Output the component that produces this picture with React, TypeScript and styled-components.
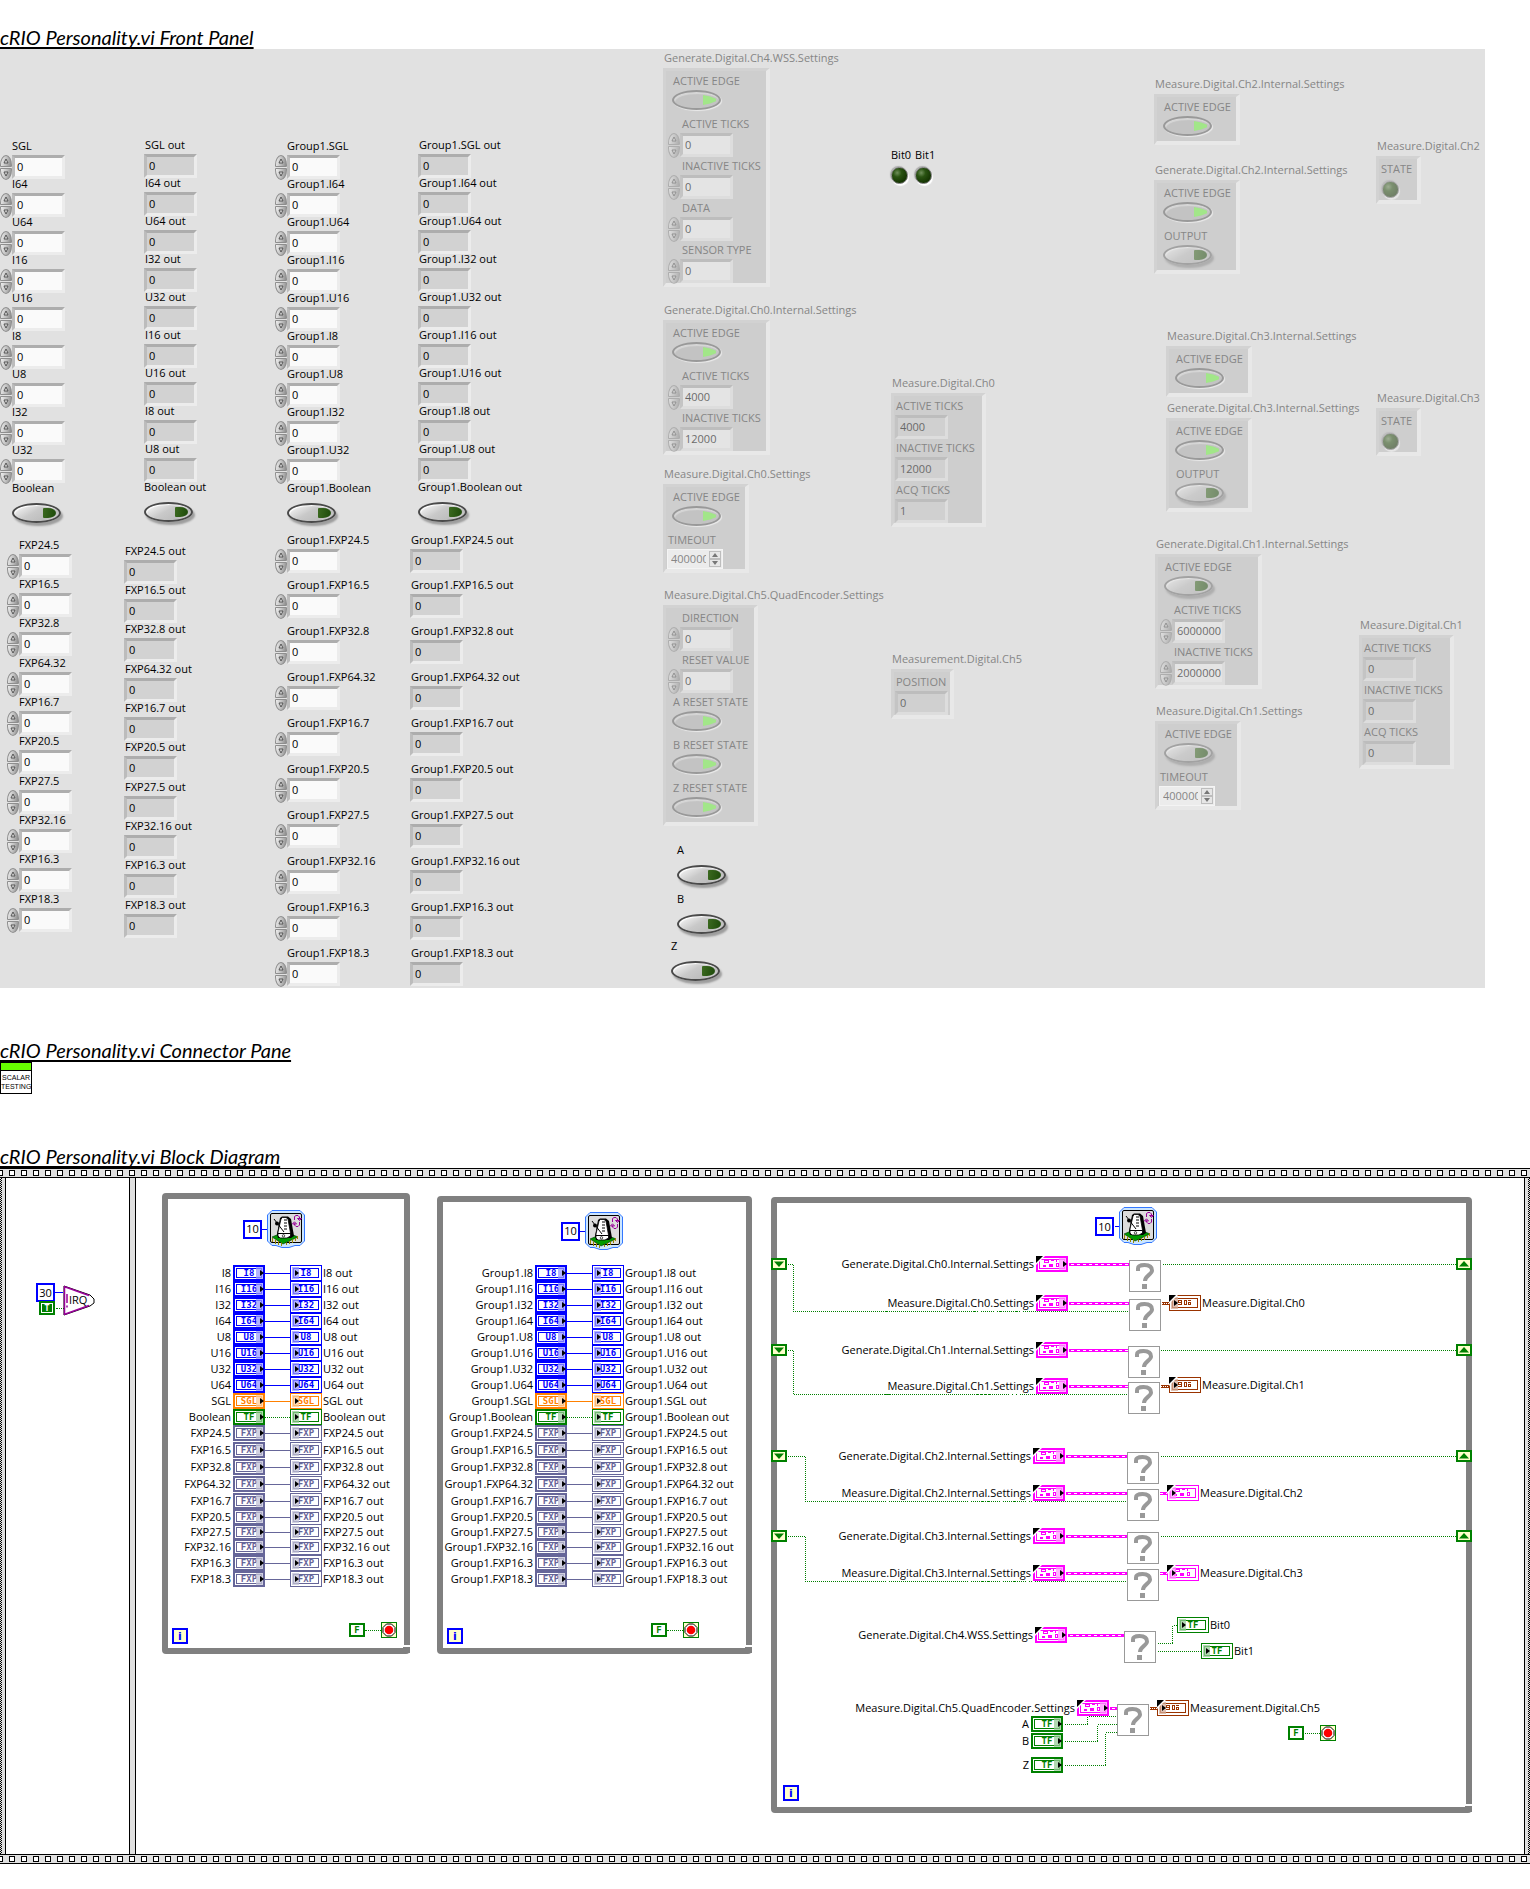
import React, { useId } from 'react';
import styled, { createGlobalStyle, css } from 'styled-components';

const GlobalStyle = createGlobalStyle`
  * { box-sizing: border-box; }
  body {
    margin: 0;
    background: #fff;
    color: #000;
    font: 11px/14px "Open Sans", "Noto Sans", sans-serif;
  }
  button, input { font: inherit; color: inherit; margin: 0; padding: 0; }
`;

/* ---------- page ---------- */

const Page = styled.main`
  padding: 25px 0;
`;

const Heading = styled.h2`
  margin: 0;
  height: 24px;
  font: italic 400 20px/24px Lato, "Open Sans", sans-serif;
  white-space: nowrap;
  text-decoration: underline;
  text-decoration-thickness: 2px;
  text-decoration-skip-ink: none;
  text-underline-offset: 2px;
`;

const Section = styled.section<{ $after?: number }>`
  margin-bottom: ${p => p.$after ?? 0}px;
`;

/* ---------- front panel ---------- */

const FrontPanel = styled.div`
  display: grid;
  grid-template-columns: 124px 151px 135px 253px 228px 263px 205px 1fr;
  width: calc(100% - 45px);
  height: 939px;
  background: #e1e1e1;
  overflow: hidden;
`;

const Column = styled.div`
  min-width: 0;
  white-space: nowrap;
`;

const List = styled.div<{ $top: number; $left?: number; $rows: string }>`
  display: grid;
  grid-template-rows: ${p => p.$rows};
  margin-top: ${p => p.$top}px;
  padding-left: ${p => p.$left ?? 0}px;
`;

const Offset = styled.div<{ $top: number; $left?: number }>`
  margin-top: ${p => p.$top}px;
  padding-left: ${p => p.$left ?? 0}px;
`;

type Kind = 'spin' | 'read' | 'button' | 'led' | 'timeout';

const FieldBox = styled.div<{ $kind: Kind; $inCluster?: boolean }>`
  display: flex;
  flex-direction: column;
  align-items: flex-start;
  height: ${p => (p.$kind === 'button' && p.$inCluster ? 36 : 40)}px;
  ${p =>
    p.$inCluster &&
    css`
      margin-bottom: ${p.$kind === 'button' ? 7 : 2}px;
      &:last-child { margin-bottom: ${p.$kind === 'button' ? 5 : 0}px; }
      ${p.$kind === 'timeout' && 'height: 36px;'}
      ${p.$kind === 'led' && 'height: 38px;'}
    `}
`;

const FieldLabel = styled.label<{ $indent: number; $gap: number }>`
  display: block;
  height: 14px;
  margin: 0 0 ${p => p.$gap}px ${p => p.$indent}px;
`;

const ControlRow = styled.div<{ $dim?: boolean }>`
  display: flex;
  align-items: center;
  height: 24px;
  color: #000;
  opacity: ${p => (p.$dim ? 0.5 : 1)};
`;

const SpinnerBox = styled.div`
  display: flex;
  flex-direction: column;
  width: 12px;
  gap: 1px;
`;

const SpinButton = styled.button<{ $down?: boolean }>`
  display: flex;
  justify-content: center;
  align-items: center;
  width: 12px;
  height: 12px;
  border: 1px solid #8e8e8e;
  border-radius: ${p => (p.$down ? '1px 1px 6px 6px / 1px 1px 10px 10px' : '6px 6px 1px 1px / 10px 10px 1px 1px')};
  background: linear-gradient(100deg, #f0f0f0, #bdbdbd 55%, #8c8c8c);
`;

const ValueBox = styled.input<{ $read?: boolean }>`
  width: 53px;
  height: 24px;
  padding: 0 0 1px 2px;
  border: 3px solid;
  border-color: #adadad #ececec #ececec #bcbcbc;
  border-radius: 0;
  background: ${p => (p.$read ? '#d2d2d2' : '#fafafa')};
  outline: none;
`;

const TimeoutBox = styled.div`
  display: flex;
  align-items: center;
  gap: 3px;
  width: 56px;
  height: 20px;
  padding: 0 2px 0 3px;
  background: #ececec;
  border: 1px solid #f4f4f4;
  color: #868686;
`;

const TimeoutInput = styled.input`
  width: 35px;
  border: 0;
  background: transparent;
  outline: none;
`;

const StepperBox = styled.div`
  display: flex;
  flex-direction: column;
  width: 12px;
`;

const StepButton = styled.button`
  display: flex;
  justify-content: center;
  align-items: center;
  width: 12px;
  height: 8px;
  border: 1px solid #bdbdbd;
  background: #e6e6e6;
`;

const Toggle = styled.input<{ $dim?: boolean }>`
  appearance: none;
  display: flex;
  justify-content: flex-end;
  align-items: center;
  width: 49px;
  height: 20px;
  padding-right: 3px;
  border: 2px solid ${p => (p.$dim ? '#777' : '#4a4a4a')};
  border-radius: 50%;
  background: linear-gradient(150deg, #f2f2f2 10%, #c9c9c9 45%, #bdbdbd 75%, #dedede);
  box-shadow: 2px 3px 2px rgba(0, 0, 0, 0.3), inset 1px 1px 1px #fff;
  opacity: ${p => (p.$dim ? 0.5 : 1)};
  &::after {
    content: '';
    width: 13px;
    height: 10px;
    background: linear-gradient(100deg, #3c6a20, #1d4a0a);
    border-radius: 1px 8px 8px 1px / 1px 5px 5px 1px;
  }
  &:checked {
    border-color: #777;
    background: #bcbcbc;
    box-shadow: 1px 1px 1px #fff, inset 1px 2px 1px #ddd;
    opacity: ${p => (p.$dim ? 0.6 : 1)};
  }
  &:checked::after {
    background: #86f65c;
    border-radius: 0;
    clip-path: polygon(0 0, 55% 14%, 100% 38%, 100% 62%, 55% 86%, 0 100%);
  }
`;

const Led = styled.output<{ $dim?: boolean }>`
  display: block;
  width: 17px;
  height: 17px;
  margin-left: ${p => (p.$dim ? 2 : 0)}px;
  border-radius: 50%;
  border: 1px solid #777;
  background: radial-gradient(circle at 35% 32%, #6f8f5a, #2a5312 30%, #163603 70%);
  box-shadow: 1px 2px 1px #fff, -1px -1px 1px #aaa;
  opacity: ${p => (p.$dim ? 0.5 : 1)};
`;

const ClusterBox = styled.fieldset<{ $top: number; $left?: number }>`
  margin: ${p => p.$top}px 0 0 ${p => p.$left ?? 0}px;
  padding: 0;
  border: 0;
  min-width: 0;
  color: #868686;
`;

const ClusterTitle = styled.legend`
  height: 18px;
  padding: 0 0 0 1px;
  line-height: 16px;
`;

const ClusterFrame = styled.div<{ $width: number }>`
  width: ${p => p.$width}px;
  padding: 3px 0 0 1px;
  border: solid;
  border-width: 3px 4px 4px 3px;
  border-color: #d2d2d2 #e8e8e8 #e8e8e8 #d2d2d2;
  background: #cecece;
`;

const BitRow = styled.div`
  display: flex;
  gap: 4px;
  margin-top: 99px;
  height: 36px;
`;

function Triangle({ down, color = '#3a3a3a' }: { down?: boolean; color?: string }) {
  return (
    <svg width="6" height="4" viewBox="0 0 6 4" aria-hidden="true">
      <path d={down ? 'M0 0H6L3 4Z' : 'M0 4H6L3 0Z'} fill={color} />
    </svg>
  );
}

function SpinGlyph({ down }: { down?: boolean }) {
  return (
    <svg width="6" height="6" viewBox="0 0 6 6" aria-hidden="true">
      <path d={down ? 'M1 1H5L3 5Z' : 'M1 5H5L3 1Z'} fill="#e2e2e2" stroke="#555" />
    </svg>
  );
}

interface FieldProps {
  label: string;
  kind: Kind;
  value?: string;
  on?: boolean;
  dim?: boolean;
  inCluster?: boolean;
}

function Field({ label, kind, value = '0', on, dim, inCluster }: FieldProps) {
  const id = useId();
  let indent = 0;
  if (kind === 'spin') indent = inCluster ? 15 : 12;
  if (kind === 'button') indent = inCluster ? 6 : 0;
  if (kind === 'read') indent = 1;
  if (inCluster && (kind === 'timeout' || kind === 'led')) indent = 1;
  const gap = kind === 'button' && !inCluster ? 8 : kind === 'led' ? 5 : 2;
  return (
    <FieldBox $kind={kind} $inCluster={inCluster}>
      <FieldLabel htmlFor={id} $indent={indent} $gap={gap}>{label}</FieldLabel>
      {kind === 'spin' && (
        <Offset $top={0} $left={inCluster ? 1 : 0}>
          <ControlRow $dim={dim}>
            <SpinnerBox>
              <SpinButton aria-label={`Increase ${label}`}><SpinGlyph /></SpinButton>
              <SpinButton $down aria-label={`Decrease ${label}`}><SpinGlyph down /></SpinButton>
            </SpinnerBox>
            <ValueBox id={id} defaultValue={value} />
          </ControlRow>
        </Offset>
      )}
      {kind === 'read' && (
        <ControlRow $dim={dim}><ValueBox id={id} $read readOnly value={value} /></ControlRow>
      )}
      {kind === 'button' && (
        <Offset $top={0} $left={inCluster ? 5 : 0}>
          <Toggle id={id} type="checkbox" defaultChecked={on} $dim={dim} />
        </Offset>
      )}
      {kind === 'led' && <Led id={id} $dim={dim} aria-label={label} />}
      {kind === 'timeout' && (
        <TimeoutBox>
          <TimeoutInput id={id} defaultValue={value} />
          <StepperBox>
            <StepButton aria-label="Increase timeout"><Triangle color="#777" /></StepButton>
            <StepButton aria-label="Decrease timeout"><Triangle down color="#777" /></StepButton>
          </StepperBox>
        </TimeoutBox>
      )}
    </FieldBox>
  );
}

interface ClusterProps {
  title: string;
  top: number;
  left?: number;
  width: number;
  fields: FieldProps[];
}

function Cluster({ title, top, left, width, fields }: ClusterProps) {
  return (
    <ClusterBox $top={top} $left={left}>
      <ClusterTitle>{title}</ClusterTitle>
      <ClusterFrame $width={width}>
        {fields.map(f => <Field key={f.label} {...f} dim inCluster />)}
      </ClusterFrame>
    </ClusterBox>
  );
}

const EDGE: FieldProps = { label: 'ACTIVE EDGE', kind: 'button', on: true };
const EDGE_OFF: FieldProps = { label: 'ACTIVE EDGE', kind: 'button' };
const OUTPUT: FieldProps = { label: 'OUTPUT', kind: 'button' };
const STATE: FieldProps = { label: 'STATE', kind: 'led' };
const TIMEOUT: FieldProps = { label: 'TIMEOUT', kind: 'timeout', value: '400000' };
const spin = (label: string, value = '0'): FieldProps => ({ label, kind: 'spin', value });
const read = (label: string, value = '0'): FieldProps => ({ label, kind: 'read', value });

const INPUTS = ['SGL', 'I64', 'U64', 'I16', 'U16', 'I8', 'U8', 'I32', 'U32'];
const OUTPUTS = ['SGL', 'I64', 'U64', 'I32', 'U32', 'I16', 'U16', 'I8', 'U8'];
const FIXED = ['24.5', '16.5', '32.8', '64.32', '16.7', '20.5', '27.5', '32.16', '16.3', '18.3'].map(n => `FXP${n}`);

const SCALAR_ROWS = 'repeat(10, 38px)';
const FIXED_ROWS = 'repeat(3, 39px 39px 40px) 40px';
const GROUP_ROWS = '45px repeat(9, 46px)';

function ScalarList({ top, left, prefix = '', out }: { top: number; left?: number; prefix?: string; out?: boolean }) {
  const tail = out ? ' out' : '';
  return (
    <List $top={top} $left={left} $rows={SCALAR_ROWS}>
      {(out ? OUTPUTS : INPUTS).map(n => (
        <Field key={n} label={`${prefix}${n}${tail}`} kind={out ? 'read' : 'spin'} />
      ))}
      <Offset $top={0} $left={out ? 0 : 12}>
        <Field label={`${prefix}Boolean${tail}`} kind="button" />
      </Offset>
    </List>
  );
}

function FixedList({ top, left, prefix = '', out, rows }: { top: number; left?: number; prefix?: string; out?: boolean; rows: string }) {
  const tail = out ? ' out' : '';
  return (
    <List $top={top} $left={left} $rows={rows}>
      {FIXED.map(n => <Field key={n} label={`${prefix}${n}${tail}`} kind={out ? 'read' : 'spin'} />)}
    </List>
  );
}

function FrontPanelView() {
  return (
    <FrontPanel>
      <Column>
        <ScalarList top={90} />
        <FixedList top={19} left={7} rows={FIXED_ROWS} />
      </Column>
      <Column>
        <ScalarList top={89} left={20} out />
        <FixedList top={26} out rows={FIXED_ROWS} />
      </Column>
      <Column>
        <ScalarList top={90} prefix="Group1." />
        <FixedList top={14} prefix="Group1." rows={GROUP_ROWS} />
      </Column>
      <Column>
        <ScalarList top={89} left={8} prefix="Group1." out />
        <FixedList top={15} prefix="Group1." out rows={GROUP_ROWS} />
      </Column>
      <Column>
        <Cluster title="Generate.Digital.Ch4.WSS.Settings" top={1} width={107}
          fields={[EDGE, spin('ACTIVE TICKS'), spin('INACTIVE TICKS'), spin('DATA'), spin('SENSOR TYPE')]} />
        <Cluster title="Generate.Digital.Ch0.Internal.Settings" top={15} width={107}
          fields={[EDGE, spin('ACTIVE TICKS', '4000'), spin('INACTIVE TICKS', '12000')]} />
        <Cluster title="Measure.Digital.Ch0.Settings" top={11} width={86} fields={[EDGE, TIMEOUT]} />
        <Cluster title="Measure.Digital.Ch5.QuadEncoder.Settings" top={14} width={95}
          fields={[
            spin('DIRECTION'), spin('RESET VALUE'),
            { ...EDGE, label: 'A RESET STATE' }, { ...EDGE, label: 'B RESET STATE' }, { ...EDGE, label: 'Z RESET STATE' },
          ]} />
        <Offset $top={17} $left={14}><Field label="A" kind="button" /></Offset>
        <Offset $top={9} $left={14}><Field label="B" kind="button" /></Offset>
        <Offset $top={7} $left={8}><Field label="Z" kind="button" /></Offset>
      </Column>
      <Column>
        <BitRow>
          <Field label="Bit0" kind="led" />
          <Field label="Bit1" kind="led" />
        </BitRow>
        <Cluster title="Measure.Digital.Ch0" top={191} width={95}
          fields={[read('ACTIVE TICKS', '4000'), read('INACTIVE TICKS', '12000'), read('ACQ TICKS', '1')]} />
        <Cluster title="Measurement.Digital.Ch5" top={124} width={63} fields={[read('POSITION')]} />
      </Column>
      <Column>
        <Cluster title="Measure.Digital.Ch2.Internal.Settings" top={27} width={86} fields={[EDGE]} />
        <Cluster title="Generate.Digital.Ch2.Internal.Settings" top={17} width={86} fields={[EDGE, OUTPUT]} />
        <Cluster title="Measure.Digital.Ch3.Internal.Settings" top={54} left={12} width={86} fields={[EDGE]} />
        <Cluster title="Generate.Digital.Ch3.Internal.Settings" top={3} left={12} width={86} fields={[EDGE, OUTPUT]} />
        <Cluster title="Generate.Digital.Ch1.Internal.Settings" top={24} left={1} width={107}
          fields={[EDGE_OFF, spin('ACTIVE TICKS', '6000000'), spin('INACTIVE TICKS', '2000000')]} />
        <Cluster title="Measure.Digital.Ch1.Settings" top={14} left={1} width={86} fields={[EDGE_OFF, TIMEOUT]} />
      </Column>
      <Column>
        <Cluster title="Measure.Digital.Ch2" top={89} left={17} width={45} fields={[STATE]} />
        <Cluster title="Measure.Digital.Ch3" top={186} left={17} width={45} fields={[STATE]} />
        <Cluster title="Measure.Digital.Ch1" top={161} width={95}
          fields={[read('ACTIVE TICKS'), read('INACTIVE TICKS'), read('ACQ TICKS')]} />
      </Column>
    </FrontPanel>
  );
}

/* ---------- connector pane ---------- */

const PaneIcon = styled.div`
  width: 32px;
  height: 32px;
  border: 1px solid #000;
  background: linear-gradient(#66ff00 7px, #000 7px, #000 8px, #fff 8px);
  padding-top: 10px;
  font: 400 7px/9px "Liberation Sans", sans-serif;
  text-align: center;
  white-space: nowrap;
`;

/* ---------- block diagram ---------- */

const Diagram = styled.div`
  white-space: nowrap;
`;

const Frames = styled.div`
  display: flex;
  gap: 5px;
  padding: 0 5px;
  background:
    linear-gradient(#e0e0e0, #e0e0e0) 2px 0 / calc(100% - 4px) 100% no-repeat,
    repeating-conic-gradient(#000 0 25%, #e0e0e0 0 50%) 0 0 / 2px 2px;
`;

const Frame = styled.div<{ $width?: number }>`
  border: 1px solid #000;
  border-width: 0 1px;
  background: #fff;
  ${p => (p.$width ? `flex: 0 0 ${p.$width}px;` : 'flex: 1; display: flex; align-items: flex-start;')}
  min-height: 676px;
`;

const Loop = styled.section<{ $top: number; $left: number; $width: number; $height: number }>`
  position: relative;
  display: flex;
  flex-direction: column;
  flex: none;
  width: ${p => p.$width}px;
  height: ${p => p.$height}px;
  margin: ${p => p.$top}px 0 0 ${p => p.$left}px;
  border: 6px solid #808080;
  border-radius: 4px;
`;

const LoopNotch = styled.svg`
  position: absolute;
  right: -6px;
  bottom: -6px;
`;

const TimerRow = styled.div<{ $top: number; $left: number }>`
  display: flex;
  align-items: center;
  margin: ${p => p.$top}px 0 0 ${p => p.$left}px;
  height: 38px;
`;

const NumberConst = styled.span`
  display: grid;
  place-items: center;
  width: 19px;
  height: 19px;
  border: 2px solid #0000ff;
  background: #fff;
`;

const HLine = styled.span<{ $width: number; $color: string; $dotted?: boolean }>`
  display: block;
  width: ${p => p.$width}px;
  border-top: 1px ${p => (p.$dotted ? 'dotted' : 'solid')} ${p => p.$color};
`;

const TerminalRows = styled.div<{ $top: number }>`
  display: grid;
  grid-template-rows: repeat(10, 16px) repeat(4, 17px) 16px 15px 15px repeat(3, 16px);
  margin-top: ${p => p.$top}px;
`;

const TerminalRow = styled.div<{ $label: number }>`
  display: grid;
  grid-template-columns: ${p => p.$label}px 32px 25px 32px 1fr;
  align-items: center;
  height: 16px;
`;

const NodeLabel = styled.span<{ $right?: boolean }>`
  line-height: 16px;
  padding: 0 2px 0 1px;
  justify-self: ${p => (p.$right ? 'end' : 'start')};
`;

const TerminalBox = styled.span<{ $color: string; $out?: boolean }>`
  position: relative;
  display: block;
  flex: none;
  width: 32px;
  height: 16px;
  padding: ${p => (p.$out ? 2 : 1)}px;
  border: ${p => (p.$out ? 1 : 2)}px solid ${p => p.$color};
  background: #fff;
  color: ${p => p.$color};
  &::after {
    content: '';
    position: absolute;
    top: ${p => (p.$out ? 1 : 0)}px;
    bottom: ${p => (p.$out ? 1 : 0)}px;
    ${p => (p.$out ? 'left: 1px;' : 'right: 0;')}
    width: 7px;
    background: linear-gradient(rgba(255, 255, 255, 0.6), rgba(255, 255, 255, 0.6)), ${p => p.$color};
    opacity: 0.75;
  }
`;

const TerminalInner = styled.span`
  display: grid;
  place-items: center;
  height: 10px;
  border: 1px solid;
  font: 700 9px/8px "DejaVu Sans Mono", monospace;
`;

const TerminalArrow = styled.svg<{ $out?: boolean }>`
  position: absolute;
  z-index: 1;
  top: ${p => (p.$out ? 4 : 3)}px;
  ${p => (p.$out ? 'left: 4px;' : 'right: -1px;')}
`;

const Corner = styled.svg<{ $out?: boolean }>`
  position: absolute;
  z-index: 1;
  top: ${p => (p.$out ? -1 : -2)}px;
  left: ${p => (p.$out ? -1 : -2)}px;
`;

const BoolConst = styled.span<{ $solid?: boolean }>`
  display: grid;
  place-items: center;
  width: 16px;
  height: 14px;
  border: 2px solid #008000;
  background: ${p => (p.$solid ? '#008000' : '#fff')};
  color: ${p => (p.$solid ? '#fff' : '#008000')};
  box-shadow: ${p => (p.$solid ? 'inset 0 0 0 1px #fff' : 'none')};
  font: 700 9px/9px "DejaVu Sans Mono", monospace;
`;

const IterBox = styled.span`
  display: grid;
  place-items: center;
  width: 16px;
  height: 16px;
  border: 2px solid #0000ff;
  background: #ffffcc;
  color: #0000ff;
  font: 700 11px/11px "DejaVu Sans", sans-serif;
`;

const LoopFooter = styled.div<{ $gap: number }>`
  display: flex;
  align-items: center;
  margin: 35px 0 0 4px;
  gap: ${p => p.$gap}px;
`;

const StopRow = styled.div`
  display: flex;
  align-items: center;
  height: 16px;
  margin-bottom: 12px;
`;

const Node = styled.div<{ $x: number; $y: number }>`
  position: absolute;
  left: ${p => p.$x}px;
  top: ${p => p.$y}px;
`;

const LabelBefore = styled.span`
  position: absolute;
  right: 100%;
  top: 0;
  padding-right: 2px;
  line-height: 16px;
`;

const LabelAfter = styled.span`
  position: absolute;
  left: 100%;
  top: 0;
  padding-left: 1px;
  line-height: 16px;
`;

const Wires = styled.svg`
  position: absolute;
  left: 0;
  top: 0;
  width: 100%;
  height: 100%;
`;

const IrqArea = styled.div`
  position: relative;
  height: 100%;
`;

const IrqText = styled.span`
  position: absolute;
  left: 6px;
  top: 8px;
  line-height: 14px;
`;

const GREEN = '#008000';
const BLUE = '#0000ff';
const ORANGE = '#ff8000';
const SLATE = '#666699';
const PINK = '#ff00ff';
const BROWN = '#993300';

function ClusterGlyph({ brown }: { brown?: boolean }) {
  return brown ? (
    <svg width="14" height="6" viewBox="0 0 14 6" shapeRendering="crispEdges" fill={BROWN} aria-hidden="true">
      <path d="M0 0H4V4H3V1H1V2H3V3H0ZM0 4H4V5H0ZM6 0H9V5H6ZM7 1V4H8V1ZM10 0H13V1H10ZM10 2H13V5H10ZM11 3V4H12V3Z" fillRule="evenodd" />
    </svg>
  ) : (
    <svg width="18" height="8" viewBox="0 0 18 8" shapeRendering="crispEdges" fill={PINK} aria-hidden="true">
      <path d="M1 0H6V3H1ZM2 1V2H5V1ZM8 0H11V1H8ZM13 0H14V2H13ZM0 5H3V7H0ZM6 4H10V7H6ZM13 3H16V7H13ZM14 4V6H15V4Z" fillRule="evenodd" />
    </svg>
  );
}

function Terminal({ type, color, out }: { type: string; color: string; out?: boolean }) {
  const cluster = type === 'cluster';
  return (
    <TerminalBox $color={color} $out={out}>
      <TerminalInner>{cluster ? <ClusterGlyph brown={color === BROWN} /> : type}</TerminalInner>
      <TerminalArrow $out={out} width="4" height="6" viewBox="0 0 4 6" aria-hidden="true">
        <path d="M0 0L4 3L0 6Z" fill="#000" />
      </TerminalArrow>
      {cluster && (
        <Corner $out={out} width="9" height="9" viewBox="0 0 9 9" aria-hidden="true">
          <path d="M0 0H9L0 9Z" fill="#fff" />
          <path d="M0 0H7L0 7Z" fill="#000" />
        </Corner>
      )}
    </TerminalBox>
  );
}

function Metronome() {
  return (
    <svg width="38" height="38" viewBox="0 0 38 38" aria-hidden="true">
      <path d="M5 .5H33L37.5 5V31L33 35.5H28L22 37.5H15L9 35.5H5L.5 31V5Z" fill="#cce6ff" stroke="#3377ff" />
      <rect x="3.5" y="3.5" width="31" height="29" rx="1.5" fill="#dcdcdc" stroke="#000" />
      <path d="M5 27L16 34L31 27L24 24H12Z" fill="#009900" stroke="#003300" strokeWidth=".6" />
      <path d="M5.5 28V32M8.5 29.5V34M11.5 31V35M14.5 32.5V36M19.5 32.5V35M22.5 31V34M25.5 29.5V33M28.5 28V31M30.5 26V29" stroke="#998800" />
      <path d="M13 8L15 6.5H21L24 9L27 26L24 28H11L10 24Z" fill="#000" />
      <path d="M14 9L15.5 7.5H19L21 9L23.5 23V26L20 28H13L11 26V22Z" fill="#fff" stroke="#000" strokeWidth=".8" />
      <path d="M17 10H20M17 13H20M17 16H20M17 19H20" stroke="#000" />
      <path d="M11 23.5H23.5M7 9L17 22" stroke="#000" />
      <circle cx="10" cy="13.5" r="2" fill="#000" />
      <circle cx="16.5" cy="25.8" r="1.2" fill="none" stroke="#000" strokeWidth=".7" />
      <path d="M27.5 10V6.5L29 5.5H31L32.5 7V9.5M30.5 8.5H34.5L32.5 10.5ZM32.5 12V15L31 16.5H29L27.5 15V13.5M25.5 14L27.5 11.8L29.5 14Z" fill="none" stroke="#990099" />
    </svg>
  );
}

function StopSign() {
  return (
    <svg width="16" height="16" viewBox="0 0 16 16" role="img" aria-label="Stop condition">
      <rect x=".5" y=".5" width="15" height="15" fill="#ffffcc" stroke={GREEN} />
      <path d="M5.5 2H10.5L14 5.5V10.5L10.5 14H5.5L2 10.5V5.5Z" fill="#fff" stroke="#000" />
      <circle cx="8" cy="8" r="4.3" fill="#f00" />
    </svg>
  );
}

function Question() {
  return (
    <svg width="32" height="32" viewBox="0 0 32 32" role="img" aria-label="Missing node">
      <rect x=".5" y=".5" width="31" height="31" fill="#fff" stroke="#999" />
      <path d="M9 11V8.500C9 6.200 11.500 5 15.500 5C20.500 5 23 7.200 23 10.500C23 14.500 16 15.500 16 21" fill="none" stroke="#999" strokeWidth="4" />
      <rect x="13" y="24" width="5" height="5" fill="#999" />
    </svg>
  );
}

function ShiftRegister({ up }: { up?: boolean }) {
  return (
    <svg width="16" height="12" viewBox="0 0 16 12" role="img" aria-label="Shift register">
      <rect x="1" y="1" width="14" height="10" fill="#ffffcc" stroke={GREEN} strokeWidth="2" />
      <path d={up ? 'M3 8.5L8 3L13 8.5Z' : 'M3 3.5H13L8 9Z'} fill={GREEN} />
    </svg>
  );
}

function Notch() {
  return (
    <LoopNotch width="8" height="10" viewBox="0 0 8 10" shapeRendering="crispEdges" aria-hidden="true">
      <path d="M2 1H8V3H2Z" fill="#fff" />
      <path d="M0 4H1V3H8V9H0Z" fill="#808080" />
      <path d="M7 9H8V10H7Z" fill="#fff" />
    </LoopNotch>
  );
}

const ROWS: { name: string; type: string; color: string }[] = [
  ...['I8', 'I16', 'I32', 'I64', 'U8', 'U16', 'U32', 'U64'].map(n => ({ name: n, type: n, color: BLUE })),
  { name: 'SGL', type: 'SGL', color: ORANGE },
  { name: 'Boolean', type: 'TF', color: GREEN },
  ...FIXED.map(n => ({ name: n, type: 'FXP', color: SLATE })),
];

interface CopyLoopProps {
  prefix?: string;
  top: number; left: number; width: number; height: number;
  label: number; timerLeft: number; timerTop: number; rowsTop: number; footerGap: number;
}

function CopyLoop({ prefix = '', top, left, width, height, label, timerLeft, timerTop, rowsTop, footerGap }: CopyLoopProps) {
  return (
    <Loop $top={top} $left={left} $width={width} $height={height}>
      <TimerRow $top={timerTop} $left={timerLeft}>
        <NumberConst>10</NumberConst>
        <HLine $width={5} $color={BLUE} />
        <Metronome />
      </TimerRow>
      <TerminalRows $top={rowsTop}>
        {ROWS.map(r => (
          <TerminalRow key={r.name} $label={label}>
            <NodeLabel $right>{prefix}{r.name}</NodeLabel>
            <Terminal type={r.type} color={r.color} />
            <HLine $width={25} $color={r.color} $dotted={r.type === 'TF'} />
            <Terminal type={r.type} color={r.color} out />
            <NodeLabel>{prefix}{r.name} out</NodeLabel>
          </TerminalRow>
        ))}
      </TerminalRows>
      <LoopFooter $gap={footerGap}>
        <IterBox>i</IterBox>
        <StopRow>
          <BoolConst>F</BoolConst>
          <HLine $width={16} $color={GREEN} $dotted />
          <StopSign />
        </StopRow>
      </LoopFooter>
      <Notch />
    </Loop>
  );
}

const SOURCES = [
  { name: 'Generate.Digital.Ch0.Internal.Settings', x: 259, y: 53, qx: 352, qy: 57 },
  { name: 'Measure.Digital.Ch0.Settings', x: 259, y: 92, qx: 352, qy: 96 },
  { name: 'Generate.Digital.Ch1.Internal.Settings', x: 259, y: 139, qx: 351, qy: 143 },
  { name: 'Measure.Digital.Ch1.Settings', x: 259, y: 175, qx: 351, qy: 179 },
  { name: 'Generate.Digital.Ch2.Internal.Settings', x: 256, y: 245, qx: 350, qy: 249 },
  { name: 'Measure.Digital.Ch2.Internal.Settings', x: 256, y: 282, qx: 350, qy: 286 },
  { name: 'Generate.Digital.Ch3.Internal.Settings', x: 256, y: 325, qx: 350, qy: 329 },
  { name: 'Measure.Digital.Ch3.Internal.Settings', x: 256, y: 362, qx: 350, qy: 366 },
  { name: 'Generate.Digital.Ch4.WSS.Settings', x: 258, y: 424, qx: 347, qy: 428 },
  { name: 'Measure.Digital.Ch5.QuadEncoder.Settings', x: 300, y: 497, qx: 340, qy: 501 },
];

const SINKS = [
  { name: 'Measure.Digital.Ch0', x: 392, y: 92, type: 'cluster', color: BROWN },
  { name: 'Measure.Digital.Ch1', x: 392, y: 174, type: 'cluster', color: BROWN },
  { name: 'Measure.Digital.Ch2', x: 390, y: 282, type: 'cluster', color: PINK },
  { name: 'Measure.Digital.Ch3', x: 390, y: 362, type: 'cluster', color: PINK },
  { name: 'Bit0', x: 400, y: 414, type: 'TF', color: GREEN },
  { name: 'Bit1', x: 424, y: 440, type: 'TF', color: GREEN },
  { name: 'Measurement.Digital.Ch5', x: 380, y: 497, type: 'cluster', color: BROWN },
];

const BOOLEANS = [
  { name: 'A', y: 513 },
  { name: 'B', y: 530 },
  { name: 'Z', y: 554 },
];

const BOOL_WIRES = [
  'M10 61H16V108H352', 'M10 147H16V191H351', 'M10 253H28V298H350', 'M10 333H28V378H350',
  'M385 61H679', 'M383 147H679', 'M383 253H679', 'M383 333H679',
  'M380 440H395V422H400', 'M380 448H424',
  'M287 521H310V513H340', 'M287 538H320V521H340', 'M287 562H328V529H340',
];

const SINK_WIRES = [
  { d: 'M384 100H392', color: BROWN }, { d: 'M383 183H392', color: BROWN },
  { d: 'M382 290H390', color: PINK }, { d: 'M382 370H390', color: PINK },
  { d: 'M372 505H380', color: BROWN },
];

function ChannelLoop() {
  return (
    <Loop $top={19} $left={19} $width={701} $height={616}>
      <Wires aria-hidden="true">
        <g transform="translate(.5 .5)" fill="none" shapeRendering="crispEdges">
          {BOOL_WIRES.map(d => <path key={d} d={d} stroke={GREEN} strokeDasharray="1 1" />)}
          {SOURCES.map(s => (
            <g key={s.name}>
              <path d={`M${s.x + 32} ${s.y + 8}H${s.qx}`} stroke={PINK} strokeWidth="3" />
              <path d={`M${s.x + 34} ${s.y + 8}H${s.qx}`} stroke="#fff" strokeDasharray="3 3" />
            </g>
          ))}
          {SINK_WIRES.map(w => (
            <g key={w.d}>
              <path d={w.d} stroke={w.color} strokeWidth="3" />
              <path d={w.d} stroke="#fff" strokeDasharray={w.color === BROWN ? '1 1' : '3 3'} />
            </g>
          ))}
          <path d="M337 23H342" stroke={BLUE} />
          <path d="M527 530H543" stroke={GREEN} strokeDasharray="1 1" />
        </g>
      </Wires>
      <Node $x={318} $y={14}><NumberConst>10</NumberConst></Node>
      <Node $x={342} $y={4}><Metronome /></Node>
      {[55, 141, 247, 327].map(y => (
        <React.Fragment key={y}>
          <Node $x={-6} $y={y}><ShiftRegister /></Node>
          <Node $x={679} $y={y}><ShiftRegister up /></Node>
        </React.Fragment>
      ))}
      {SOURCES.map(s => (
        <React.Fragment key={s.name}>
          <Node $x={s.x} $y={s.y}>
            <LabelBefore>{s.name}</LabelBefore>
            <Terminal type="cluster" color={PINK} />
          </Node>
          <Node $x={s.qx} $y={s.qy}><Question /></Node>
        </React.Fragment>
      ))}
      {SINKS.map(s => (
        <Node key={s.name} $x={s.x} $y={s.y}>
          <Terminal type={s.type} color={s.color} out />
          <LabelAfter>{s.name}</LabelAfter>
        </Node>
      ))}
      {BOOLEANS.map(b => (
        <Node key={b.name} $x={254} $y={b.y}>
          <LabelBefore>{b.name}</LabelBefore>
          <Terminal type="TF" color={GREEN} />
        </Node>
      ))}
      <Node $x={511} $y={523}><BoolConst>F</BoolConst></Node>
      <Node $x={543} $y={522}><StopSign /></Node>
      <Node $x={6} $y={582}><IterBox>i</IterBox></Node>
      <Notch />
    </Loop>
  );
}

const StripSvg = styled.svg`
  display: block;
  width: 100%;
  height: 10px;
`;

function Strip({ id }: { id: string }) {
  return (
    <StripSvg shapeRendering="crispEdges" aria-hidden="true">
      <defs>
        <pattern id={id} x="9" width="12" height="10" patternUnits="userSpaceOnUse">
          <rect width="12" height="10" fill="#e0e0e0" />
          <rect width="12" height="1" />
          <rect y="9" width="12" height="1" />
          <rect x=".5" y="2.5" width="5" height="5" fill="#fff" stroke="#000" />
        </pattern>
      </defs>
      <rect width="100%" height="10" fill={`url(#${id})`} />
    </StripSvg>
  );
}

function BlockDiagram() {
  return (
    <Diagram>
      <Strip id="strip-top" />
      <Frames>
        <Frame $width={125}>
          <IrqArea>
            <Node $x={30} $y={105}><NumberConst>30</NumberConst></Node>
            <Node $x={33} $y={123}><BoolConst $solid>T</BoolConst></Node>
            <Node $x={49} $y={114}><HLine $width={8} $color={BLUE} /></Node>
            <Node $x={50} $y={130}><HLine $width={8} $color={GREEN} $dotted /></Node>
            <Node $x={57} $y={107}>
              <svg width="32" height="31" viewBox="0 0 32 31" aria-hidden="true">
                <path d="M1 1L27 10L31 14V18L27 21L1 30Z" fill="#fff" stroke="#000" />
                <path d="M1.5 1V30M1 1.5L26 10.5M1 29.5L26 20.5M4 9V18M4 20.5V22.5" stroke="#990099" strokeWidth="1.5" />
              </svg>
              <IrqText>IRQ</IrqText>
            </Node>
          </IrqArea>
        </Frame>
        <Frame>
          <CopyLoop top={15} left={26} width={248} height={461} label={65} timerLeft={75} timerTop={11} rowsTop={17} footerGap={161} />
          <CopyLoop prefix="Group1." top={18} left={27} width={315} height={458} label={92} timerLeft={118} timerTop={10} rowsTop={15} footerGap={188} />
          <ChannelLoop />
        </Frame>
      </Frames>
      <Strip id="strip-bottom" />
    </Diagram>
  );
}

export default function App() {
  return (
    <Page>
      <GlobalStyle />
      <Section $after={50}>
        <Heading>cRIO Personality.vi Front Panel</Heading>
        <FrontPanelView />
      </Section>
      <Section $after={50}>
        <Heading>cRIO Personality.vi Connector Pane</Heading>
        <PaneIcon>SCALAR<br />TESTING</PaneIcon>
      </Section>
      <Section>
        <Heading>cRIO Personality.vi Block Diagram</Heading>
        <BlockDiagram />
      </Section>
    </Page>
  );
}
